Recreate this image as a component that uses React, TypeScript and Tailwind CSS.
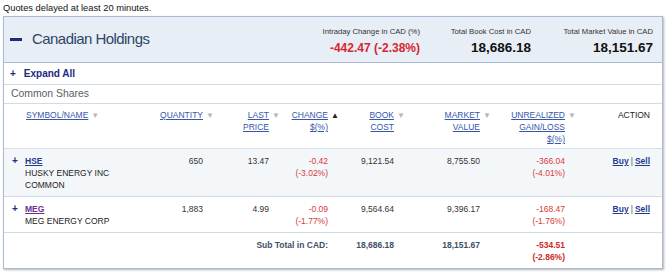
import type { ReactNode } from 'react'

// Holdings summary card — header band with totals, then a fixed-column grid of positions.
const cols = 'grid grid-cols-[146px_53px_66px_59px_66px_86px_85px_85px] pr-[12px]'

type Row = {
  symbol: string
  name: string[]
  visited?: boolean
  qty: string
  last: string
  change: string
  changePct: string
  book: string
  market: string
  gain: string
  gainPct: string
  shaded?: boolean
}

const rows: Row[] = [
  {
    symbol: 'HSE',
    name: ['HUSKY ENERGY INC', 'COMMON'],
    qty: '650',
    last: '13.47',
    change: '-0.42',
    changePct: '(-3.02%)',
    book: '9,121.54',
    market: '8,755.50',
    gain: '-366.04',
    gainPct: '(-4.01%)',
    shaded: true,
  },
  {
    symbol: 'MEG',
    name: ['MEG ENERGY CORP'],
    visited: true,
    qty: '1,883',
    last: '4.99',
    change: '-0.09',
    changePct: '(-1.77%)',
    book: '9,564.64',
    market: '9,396.17',
    gain: '-168.47',
    gainPct: '(-1.76%)',
  },
]

function Arrow({ up }: { up?: boolean }) {
  return (
    <span
      className={`absolute left-full top-0 ml-[3px] text-[8px] ${up ? 'text-[#222]' : 'text-[#b3b8bf]'}`}
    >
      {up ? '▲' : '▼'}
    </span>
  )
}

function Head({ lines, up, left }: { lines: string[]; up?: boolean; left?: boolean }) {
  return (
    <div className={left ? 'pl-[22px] text-left' : 'text-right'}>
      {lines.map((l, i) => (
        <div key={l}>
          <span className="relative text-[#3656a8] underline underline-offset-1">
            {l}
            {i === 0 && <Arrow up={up} />}
          </span>
        </div>
      ))}
    </div>
  )
}

function Stat({ label, children, w }: { label: string; children: ReactNode; w: string }) {
  return (
    <div className={`${w} text-right`}>
      <div className="text-[7.7px] leading-[10px] text-[#333]">{label}</div>
      <div className="mt-[2px] leading-[16px]">{children}</div>
    </div>
  )
}

export default function App() {
  return (
    <div className="min-h-[276px] w-[672px] bg-white font-['Liberation_Sans',Arial,sans-serif] text-[#333]">
      <div className="h-[16px] px-[3px] text-[9.3px] leading-[16px] text-[#111]">
        Quotes delayed at least 20 minutes.
      </div>

      <div className="mx-[3px] w-[660px] border border-[#a9bbd4] shadow-[1px_1px_2px_rgba(0,0,0,0.3)]">
        {/* header band */}
        <div className="flex h-[46px] border-b border-[#a9bbd4] bg-[#e7eef6]">
          <div className="flex flex-1 items-center pl-[6px]">
            <span className="h-[3px] w-[12px] bg-[#1c2c78]" />
            <span className="ml-[10px] text-[15px] tracking-[-0.55px] text-[#2e4565]">Canadian Holdings</span>
          </div>
          <div className="flex pr-[9px] pt-[10px]">
            <Stat label="Intraday Change in CAD (%)" w="w-[120px]">
              <span className="text-[12px] font-bold text-[#d9262e]">-442.47 (-2.38%)</span>
            </Stat>
            <Stat label="Total Book Cost in CAD" w="ml-[11px] w-[100px]">
              <span className="text-[13.5px] font-bold text-[#111]">18,686.18</span>
            </Stat>
            <Stat label="Total Market Value in CAD" w="ml-[10px] w-[112px]">
              <span className="text-[13.5px] font-bold text-[#111]">18,151.67</span>
            </Stat>
          </div>
        </div>

        {/* expand all */}
        <div className="flex h-[22px] items-center border-b border-[#cfdbe8] pl-[6px] text-[10px] font-bold text-[#1c2c80]">
          <span>+</span>
          <span className="ml-[8px]">Expand All</span>
        </div>

        {/* group label */}
        <div className="flex h-[19px] items-center border-b border-[#cfdbe8] pl-[7px] text-[10.4px] text-[#5a5f66]">
          Common Shares
        </div>

        {/* column headings */}
        <div className={`${cols} border-b border-[#d5e0eb] pb-[3px] pt-[5px] text-[8.5px] leading-[12px]`}>
          <Head lines={['SYMBOL/NAME']} left />
          <Head lines={['QUANTITY']} />
          <Head lines={['LAST', 'PRICE']} />
          <Head lines={['CHANGE', '$(%)']} up />
          <Head lines={['BOOK', 'COST']} />
          <Head lines={['MARKET', 'VALUE']} />
          <Head lines={['UNREALIZED', 'GAIN/LOSS', '$(%)']} />
          <div className="text-right text-[#222]">ACTION</div>
        </div>

        {/* positions */}
        {rows.map((r) => (
          <div
            key={r.symbol}
            className={`${cols} border-b border-[#cfdbe8] pb-[5px] pt-[6px] text-[8.5px] leading-[12px] ${
              r.shaded ? 'bg-[#f4f7fa]' : 'bg-white'
            }`}
          >
            <div className="flex pl-[8px]">
              <span className="w-[13px] text-[10px] font-bold text-[#1c2c80]">+</span>
              <div>
                <div
                  className={`font-bold underline underline-offset-1 ${r.visited ? 'text-[#6b2f8f]' : 'text-[#1f3d8f]'}`}
                >
                  {r.symbol}
                </div>
                {r.name.map((n) => (
                  <div key={n} className="text-[#222]">
                    {n}
                  </div>
                ))}
              </div>
            </div>
            <div className="text-right">{r.qty}</div>
            <div className="text-right">{r.last}</div>
            <div className="text-right text-[#d9383a]">
              <div>{r.change}</div>
              <div>{r.changePct}</div>
            </div>
            <div className="text-right">{r.book}</div>
            <div className="text-right">{r.market}</div>
            <div className="text-right text-[#d9383a]">
              <div>{r.gain}</div>
              <div>{r.gainPct}</div>
            </div>
            <div className="text-right font-bold">
              <span className="text-[#1f3d8f] underline underline-offset-1">Buy</span>
              <span className="mx-[2px] font-normal text-[#555]">|</span>
              <span className="text-[#1f3d8f] underline underline-offset-1">Sell</span>
            </div>
          </div>
        ))}

        {/* sub total */}
        <div className={`${cols} pb-[5px] pt-[6px] text-[8.5px] font-bold leading-[12px] text-[#3d4f66]`}>
          <div className="col-span-4 text-right">Sub Total in CAD:</div>
          <div className="text-right">18,686.18</div>
          <div className="text-right">18,151.67</div>
          <div className="text-right text-[#cc2a2a]">
            <div>-534.51</div>
            <div>(-2.86%)</div>
          </div>
          <div />
        </div>
      </div>
    </div>
  )
}
